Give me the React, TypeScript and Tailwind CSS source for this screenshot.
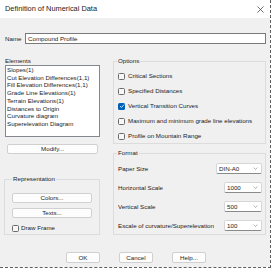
import type { ReactNode } from "react";

const elements = [
  "Slopes(1)",
  "Cut Elevation Differences(1,1)",
  "Fill Elevation Differences(1,1)",
  "Grade Line Elevations(1)",
  "Terrain Elevations(1)",
  "Distances to Origin",
  "Curvature diagram",
  "Superelevation Diagram",
];

const options = [
  { label: "Critical Sections", checked: false },
  { label: "Specified Distances", checked: false },
  { label: "Vertical Transition Curves", checked: true },
  { label: "Maximum and minimum grade line elevations", checked: false },
  { label: "Profile on Mountain Range", checked: false },
];

const formats = [
  { label: "Paper Size", value: "DIN-A0", wide: true },
  { label: "Horizontal Scale", value: "1000", wide: false },
  { label: "Vertical Scale", value: "500", wide: false },
  { label: "Escale of curvature/Superelevation", value: "100", wide: false },
];

const Checkbox = ({ checked }: { checked: boolean }) =>
  checked ? (
    <span className="w-[7px] h-[7px] rounded-[1.5px] bg-[#005fb8] flex items-center justify-center shrink-0">
      <svg viewBox="0 0 8 8" className="w-[6px] h-[6px]">
        <path d="M1.5 4.2 L3.3 6 L6.6 2.2" fill="none" stroke="#fff" strokeWidth="1.1" />
      </svg>
    </span>
  ) : (
    <span className="w-[7px] h-[7px] rounded-[1.5px] border border-[#6b6b6b] bg-[#f7f7f7] shrink-0" />
  );

const Button = ({ children, className }: { children: ReactNode; className: string }) => (
  <div
    className={`h-[10px] bg-[#fdfdfd] border border-[#d0d0d0] rounded-[2px] flex items-center justify-center ${className}`}
  >
    {children}
  </div>
);

const Group = ({ title, className, children }: { title: string; className: string; children: ReactNode }) => (
  <fieldset className={`border border-[#dcdcdc] px-[3px] ${className}`}>
    <legend className="h-[8px] leading-[8px] px-[1px]">{title}</legend>
    {children}
  </fieldset>
);

const Select = ({ value, wide }: { value: string; wide: boolean }) => (
  <div
    className={`h-[11px] bg-white border border-[#d6d6d6] border-b-[#8a8a8a] rounded-[2px] flex items-center justify-between pl-[2px] pr-[3px] ${
      wide ? "w-[46px]" : "w-[38px]"
    }`}
  >
    <span>{value}</span>
    <svg viewBox="0 0 6 4" className="w-[5px] h-[3px]">
      <path d="M0.5 0.8 L3 3.2 L5.5 0.8" fill="none" stroke="#7a7a7a" strokeWidth="0.8" />
    </svg>
  </div>
);

export default function App() {
  return (
    <div
      className="w-[272px] h-[269px] bg-white overflow-hidden text-[6.2px] leading-[8px] text-[#1b1b1b]"
      style={{ fontFamily: '"Liberation Sans", Arial, sans-serif' }}
    >
      <div className="w-[271px] h-[268px] border-r border-b border-dashed border-[#5f5f5f] flex flex-col">
        {/* Title bar */}
        <div className="h-[18px] bg-white flex items-center justify-between pl-[5px] pr-[6px]">
          <span className="text-[7.4px]">Definition of Numerical Data</span>
          <svg viewBox="0 0 8 8" className="w-[7px] h-[7px]">
            <path d="M0.5 0.5 L7.5 7.5 M7.5 0.5 L0.5 7.5" stroke="#333" strokeWidth="0.8" />
          </svg>
        </div>

        <div className="flex-1 bg-[#f0f0f0] flex flex-col">
          {/* Name */}
          <div className="mt-[15px] h-[11px] flex items-center pl-[5px]">
            <span className="w-[20px]">Name</span>
            <div className="w-[241px] h-[11px] bg-white border border-[#7a7a7a] flex items-center pl-[2px]">
              Compound Profile
            </div>
          </div>

          {/* Columns */}
          <div className="flex pl-[4px] mt-[13px]">
            <div className="w-[96px] flex flex-col">
              <span className="h-[8px] pl-[1px]">Elements</span>
              <div className="ml-[1px] w-[95px] h-[72px] bg-white border border-[#828790] pl-[1px] flex flex-col">
                {elements.map((e) => (
                  <span key={e} className="leading-[7.7px] whitespace-nowrap">
                    {e}
                  </span>
                ))}
              </div>
              <Button className="mt-[7px] ml-[3px] w-[91px]">Modify...</Button>
              <Group title="Representation" className="mt-[21px] w-[95px] h-[60px] px-[7px]">
                <div className="flex flex-col">
                  <Button className="mt-[10px] w-[80px]">Colors...</Button>
                  <Button className="mt-[5px] w-[80px]">Texts...</Button>
                  <div className="mt-[6px] h-[8px] flex items-center gap-[2px]">
                    <Checkbox checked={false} />
                    <span>Draw Frame</span>
                  </div>
                </div>
              </Group>
            </div>

            <div className="ml-[13px] w-[153px] flex flex-col">
              <Group title="Options" className="h-[87px]">
                <div className="flex flex-col gap-[7px] mt-[7px] ml-[1px]">
                  {options.map((o) => (
                    <div key={o.label} className="h-[8px] flex items-center gap-[3px] whitespace-nowrap">
                      <Checkbox checked={o.checked} />
                      <span>{o.label}</span>
                    </div>
                  ))}
                </div>
              </Group>
              <Group title="Format" className="mt-[5px] h-[86px]">
                <div className="flex flex-col gap-[8px] mt-[6px] ml-[1px]">
                  {formats.map((f) => (
                    <div key={f.label} className="h-[11px] flex items-center justify-between whitespace-nowrap">
                      <span>{f.label}</span>
                      <Select value={f.value} wide={f.wide} />
                    </div>
                  ))}
                </div>
              </Group>
            </div>
          </div>

          {/* Dialog buttons */}
          <div className="mt-[17px] pl-[66px] flex gap-[19px]">
            <Button className="w-[34px] h-[11px] border-[#0067c0]">OK</Button>
            <Button className="w-[34px] h-[11px]">Cancel</Button>
            <Button className="w-[34px] h-[11px]">Help...</Button>
          </div>
        </div>
      </div>
    </div>
  );
}
